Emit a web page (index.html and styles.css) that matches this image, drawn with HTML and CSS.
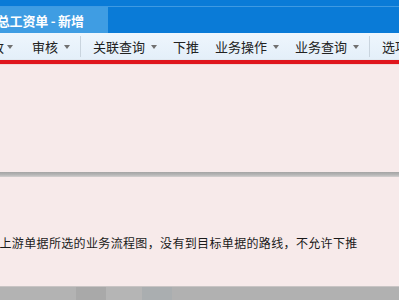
FILE: index.html
```html
<!DOCTYPE html>
<html lang="zh-CN">
<head>
<meta charset="utf-8">
<title>工资单 - 新增</title>
<link rel="stylesheet" href="styles.css">
</head>
<body>
<div class="window">
  <div class="titlebar">
    <div class="tab"><span class="tab-text">汇总工资单 - 新增</span></div>
  </div>
  <div class="toolbar">
    <div class="item first"><span>修改</span><i class="arrow"></i></div>
    <div class="item"><span>审核</span><i class="arrow"></i></div>
    <div class="sep"></div>
    <div class="item"><span>关联查询</span><i class="arrow"></i></div>
    <div class="item"><span>下推</span></div>
    <div class="item"><span>业务操作</span><i class="arrow"></i></div>
    <div class="item"><span>业务查询</span><i class="arrow"></i></div>
    <div class="sep"></div>
    <div class="item"><span>选项</span><i class="arrow"></i></div>
  </div>
  <div class="redline"></div>
  <div class="panel top"></div>
  <div class="divider"></div>
  <div class="panel bottom">
    <p class="message">上游单据所选的业务流程图，没有到目标单据的路线，不允许下推</p>
  </div>
  <div class="footer">
    <div class="fb a"></div><div class="fb b"></div><div class="fb c"></div><div class="fb d"></div>
  </div>
</div>
</body>
</html>
```

FILE: styles.css
```css
html, body {
  margin: 0;
  padding: 0;
  width: 399px;
  height: 300px;
  overflow: hidden;
  font-family: "Noto Sans CJK SC", "Noto Sans", sans-serif;
}
.window {
  width: 399px;
  height: 300px;
  display: flex;
  flex-direction: column;
  overflow: hidden;
  background: #f7eaea;
}
.titlebar {
  height: 33px;
  flex: none;
  background: #0a7bd7;
  box-sizing: border-box;
  padding-top: 7px;
  display: flex;
  position: relative;
}
.titlebar::before {
  content: "";
  position: absolute;
  left: 0; right: 0; top: 6px;
  height: 1px;
  background: #3f9ae2;
}
.tab {
  width: 108px;
  height: 26px;
  background: #3f9de3;
  display: flex;
  align-items: center;
  overflow: hidden;
}
.tab-text {
  color: #ffffff;
  font-size: 13px;
  font-weight: bold;
  white-space: nowrap;
  margin-left: -16px;
  letter-spacing: -0.2px;
}
.toolbar {
  height: 27px;
  flex: none;
  background: linear-gradient(#eef6fd, #e4eff9);
  display: flex;
  align-items: center;
  white-space: nowrap;
  overflow: hidden;
  border-bottom: 1px solid #dfe8f0;
  box-sizing: border-box;
}
.item {
  display: flex;
  align-items: center;
  gap: 6px;
  padding: 0 8px;
  font-size: 13px;
  color: #222222;
  flex: none;
}
.item.first {
  margin-left: -30px;
  gap: 3px;
  padding-right: 11px;
}
.arrow {
  width: 0;
  height: 0;
  border-left: 3.5px solid transparent;
  border-right: 3.5px solid transparent;
  border-top: 4px solid #707070;
  margin-top: 1px;
}
.sep {
  width: 1px;
  height: 21px;
  background: #c9d4de;
  margin: 0 4px 0 2px;
  flex: none;
}
.redline {
  height: 4px;
  flex: none;
  background: #e0151d;
  border-bottom: 1px solid #f0d8d8;
}
.panel.top {
  height: 107px;
  flex: none;
}
.divider {
  height: 5px;
  flex: none;
  background: linear-gradient(#a4a4a4, #b8b8b8 60%, #d4d0d0);
}
.panel.bottom {
  height: 109px;
  flex: none;
  display: flex;
  align-items: flex-start;
}
.message {
  margin: 58px 0 0 -0.5px;
  font-size: 12px;
  letter-spacing: 0.35px;
  color: #1a1a1a;
  white-space: nowrap;
  line-height: 16px;
}
.footer {
  flex: 1;
  display: flex;
  background: #b1b1b1;
  border-top: 1px solid #c8c4c4;
}
.fb { height: 100%; }
.fb.a { width: 76px; background: #b3b3b3; }
.fb.b { width: 30px; background: #a9a9a9; }
.fb.c { width: 36px; background: #b5b5b5; }
.fb.d { width: 30px; background: #aaaeb0; }
```
